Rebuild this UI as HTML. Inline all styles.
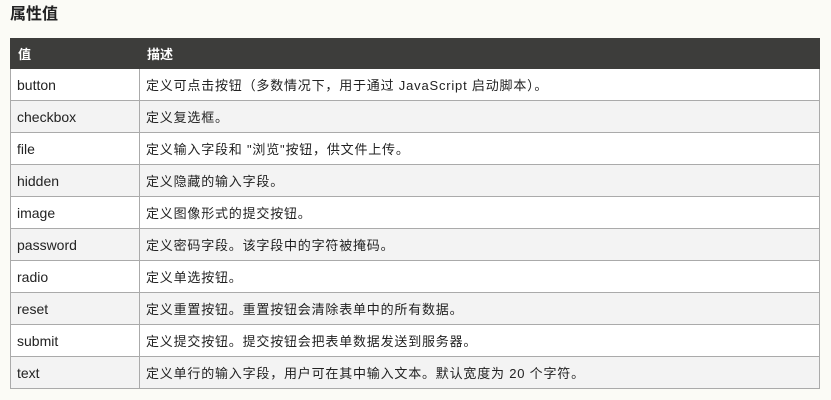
<!DOCTYPE html>
<html><head><meta charset="utf-8"><style>
body{margin:0;background:#fbfbf6;width:831px;height:400px;overflow:hidden;font-family:"Liberation Sans","Noto Sans CJK SC",sans-serif;}
h2{position:absolute;left:10px;top:3px;margin:0;font-size:16px;font-weight:bold;color:#222;line-height:24px;}
table{position:absolute;left:10px;top:38px;width:810px;border-collapse:collapse;}
th{background:#3d3d3b;color:#fff;font-size:13px;text-align:left;height:29px;padding:0 0 0 7px;border:1px solid #3d3d3b;}
td{border:1px solid #aaa;height:31px;padding:0 0 0 6px;font-size:13px;letter-spacing:0.8px;color:#222;}
td:first-child{font-size:14px;width:120px;letter-spacing:0;}
tr:nth-child(odd) td{background:#f3f3f3;}
tr:nth-child(even) td{background:#fff;}
</style></head><body>
<h2>属性值</h2>
<table>
<tr><th style="width:121px">值</th><th>描述</th></tr>
<tr><td>button</td><td>定义可点击按钮（多数情况下，用于通过 JavaScript 启动脚本）。</td></tr>
<tr><td>checkbox</td><td>定义复选框。</td></tr>
<tr><td>file</td><td>定义输入字段和 "浏览"按钮，供文件上传。</td></tr>
<tr><td>hidden</td><td>定义隐藏的输入字段。</td></tr>
<tr><td>image</td><td>定义图像形式的提交按钮。</td></tr>
<tr><td>password</td><td>定义密码字段。该字段中的字符被掩码。</td></tr>
<tr><td>radio</td><td>定义单选按钮。</td></tr>
<tr><td>reset</td><td>定义重置按钮。重置按钮会清除表单中的所有数据。</td></tr>
<tr><td>submit</td><td>定义提交按钮。提交按钮会把表单数据发送到服务器。</td></tr>
<tr><td>text</td><td>定义单行的输入字段，用户可在其中输入文本。默认宽度为 20 个字符。</td></tr>
</table>
</body></html>
